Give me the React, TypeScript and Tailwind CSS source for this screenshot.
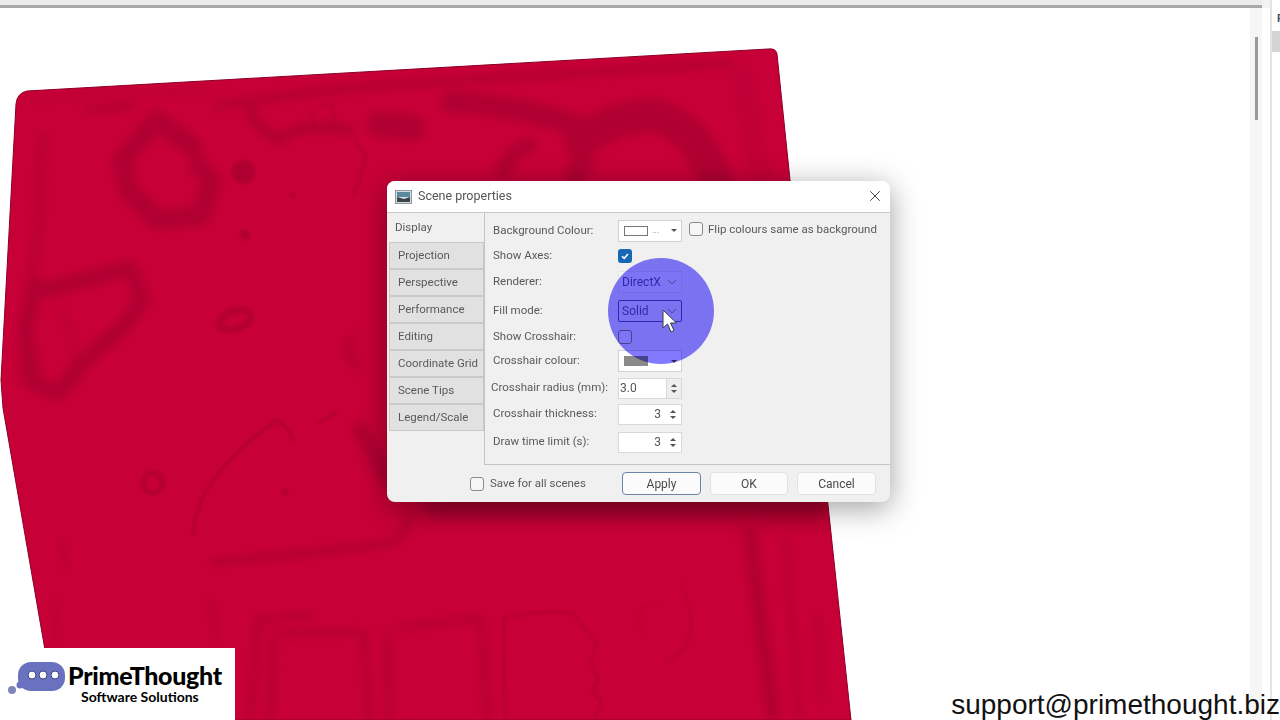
import { ReactNode } from "react";
import { X } from "lucide-react";

const MESH_OUTLINE =
  "M16 104 Q17 93 27 91 L768 49 Q776 48 777 54 L790 180 L828 505 L851 720 L50 720 L45 650 L3 408 L1 380 Z";

const tabs = [
  "Projection",
  "Perspective",
  "Performance",
  "Editing",
  "Coordinate Grid",
  "Scene Tips",
  "Legend/Scale",
];

// Red scanned surface behind the dialog
const Mesh = () => (
  <svg className="absolute left-0 top-0" width="1280" height="720">
    <defs>
      <clipPath id="mesh-clip">
        <path d={MESH_OUTLINE} />
      </clipPath>
      <filter id="soft" x="-20%" y="-20%" width="140%" height="140%">
        <feGaussianBlur stdDeviation="4" />
      </filter>
      <filter id="softer" x="-20%" y="-20%" width="140%" height="140%">
        <feGaussianBlur stdDeviation="1.4" />
      </filter>
      <filter id="softest" x="-20%" y="-100%" width="140%" height="300%">
        <feGaussianBlur stdDeviation="9" />
      </filter>
    </defs>
    <path d={MESH_OUTLINE} fill="#c80038" stroke="#8a0028" strokeWidth="1" />
    <g clipPath="url(#mesh-clip)" fill="none" stroke="#b00030" strokeLinecap="round" strokeLinejoin="round">
      <rect x="425" y="494" width="405" height="22" fill="#8f0028" stroke="none" opacity="0.8" filter="url(#softest)" />
      <g filter="url(#soft)">
        <path strokeWidth="20" d="M193 147 L157 120 L122 160 L128 190 L157 220 L200 216 L212 182 L198 165" />
        <path strokeWidth="12" d="M43 137 L38 230 L30 300 L22 380" opacity="0.5" />
        <path strokeWidth="6" d="M87 109 Q110 110 133 104" />
        <path strokeWidth="6" d="M30 100 Q120 92 210 90" opacity="0.4" />
        <path strokeWidth="10" d="M217 106 Q300 92 400 84 L730 63" opacity="0.7" />
        <path strokeWidth="34" d="M580 142 Q610 118 650 115 Q695 122 718 185" />
        <path strokeWidth="22" d="M452 102 Q520 106 575 125 Q592 150 575 178" />
        <path strokeWidth="16" d="M503 172 Q510 150 530 145" />
        <path strokeWidth="26" d="M380 124 L412 128" />
        <path strokeWidth="10" d="M250 108 Q256 130 280 140 Q300 120 350 130" />
        <path strokeWidth="6" d="M735 72 L756 180 M745 66 L768 180" opacity="0.6" />
        <path strokeWidth="16" d="M45 290 L130 268 L142 300 L125 325 L85 360 L60 392 L35 385 L25 330 L35 285" />
        <path strokeWidth="8" d="M60 310 Q80 340 70 370" opacity="0.4" />
        <path strokeWidth="7" d="M350 338 Q345 350 355 365" />
        <path strokeWidth="16" d="M360 430 L388 478" />
        <path strokeWidth="7" d="M213 562 Q300 555 390 543 Q405 538 410 515" />
        <path strokeWidth="7" d="M260 620 L313 615 M277 634 L363 632 L370 720 M273 640 L270 720" opacity="0.8" />
        <path strokeWidth="8" d="M387 635 L390 720 M400 628 L480 618 M482 625 L487 720 M258 620 L250 720" opacity="0.7" />
        <path strokeWidth="14" d="M750 533 Q760 620 773 715" />
        <path strokeWidth="6" d="M785 540 L800 720 M817 617 L822 700" opacity="0.7" />
        <path strokeWidth="12" d="M790 360 L800 470" opacity="0.3" />
        <path strokeWidth="5" d="M62 540 L66 570 M55 600 L58 640 M210 600 L217 640" opacity="0.7" />
      </g>
      <g filter="url(#softer)">
        <path strokeWidth="3" d="M193 535 Q195 495 233 457 Q255 435 277 420 Q288 425 293 440 M318 423 L336 413" />
        <path strokeWidth="2" d="M355 140 L367 157 L353 197" />
        <path strokeWidth="2" d="M312 110 L333 104 L335 130 L314 133 Z" opacity="0.7" />
        <path strokeWidth="2" d="M503 618 Q540 610 573 613 L597 645 L590 662 L599 680 L592 692 L601 702 L595 720 M503 618 L506 720" />
        <path strokeWidth="2" d="M641 610 Q650 600 665 604 M640 612 Q636 630 650 640" opacity="0.5" />
        <path strokeWidth="3" d="M680 583 Q695 610 690 635 Q682 655 665 662" opacity="0.5" />
        <circle cx="153" cy="483" r="10" strokeWidth="6" opacity="0.8" />
        <ellipse cx="235" cy="320" rx="16" ry="9" strokeWidth="8" opacity="0.8" transform="rotate(-20 235 320)" />
        <circle cx="293" cy="195" r="2" fill="#960028" strokeWidth="1" />
        <circle cx="245" cy="235" r="5" fill="#b00030" strokeWidth="1" />
        <circle cx="243" cy="172" r="12" fill="#b00030" strokeWidth="1" />
        <circle cx="285" cy="492" r="3" fill="#b00030" strokeWidth="1" />
      </g>
    </g>
  </svg>
);

const Check = ({ checked = false }: { checked?: boolean }) =>
  checked ? (
    <span className="flex h-[14px] w-[14px] items-center justify-center rounded-[3px] bg-[#1668b4]">
      <svg width="10" height="10" viewBox="0 0 10 10" fill="none" stroke="#fff" strokeWidth="1.5">
        <path d="M2 5.2 L4.2 7.3 L8 3" />
      </svg>
    </span>
  ) : (
    <span className="block h-[14px] w-[14px] rounded-[3px] border border-[#8a8a8a] bg-[#f6f6f6]" />
  );

const Swatch = ({ dark = false }: { dark?: boolean }) => (
  <div className="flex h-[22px] w-[64px] items-center gap-1 border border-[#d2d2d2] bg-white pl-[5px]">
    <span className={dark ? "h-[10px] w-[24px] bg-[#8a8a8a]" : "h-[10px] w-[24px] border border-[#777] bg-white"} />
    <span className="text-[9px] leading-none text-[#888]">{dark ? "" : "..."}</span>
    <span className="ml-auto mr-[4px] h-0 w-0 border-x-[3px] border-t-[3px] border-x-transparent border-t-[#555]" />
  </div>
);

const Combo = ({ value, active = false }: { value: string; active?: boolean }) => (
  <div
    className={`flex h-[22px] w-[64px] items-center justify-between border pl-[3px] pr-[4px] text-[12px] text-[#5f58a8] ${
      active ? "rounded-[2px] border-[#5a54b0]" : "border-[#e4e4e4] bg-[#f4f4f4]"
    }`}
  >
    {value}
    <svg width="10" height="6" viewBox="0 0 10 6" fill="none" stroke="#888" strokeWidth="1">
      <path d="M1 1 L5 5 L9 1" />
    </svg>
  </div>
);

const Spin = ({ value, left = false }: { value: string; left?: boolean }) => (
  <div className="flex h-[21px] w-[64px] items-center border border-[#d8d8d8] bg-white text-[12px] text-[#555]">
    <span className={left ? "pl-[1px]" : "flex-1 pr-[4px] text-right"}>{value}</span>
    <span
      className={`ml-auto flex h-full w-[15px] flex-col items-center justify-center gap-[3px] ${
        left ? "border-l border-[#d8d8d8] bg-[#eeeeee]" : "mr-[1px]"
      }`}
    >
      <span className="h-0 w-0 border-x-[3px] border-b-[3px] border-x-transparent border-b-[#555]" />
      <span className="h-0 w-0 border-x-[3px] border-t-[3px] border-x-transparent border-t-[#555]" />
    </span>
  </div>
);

const Row = ({ label, h, children, shift = false }: { label: string; h: string; children: ReactNode; shift?: boolean }) => (
  <div className={`grid grid-cols-[133px_1fr] items-center ${h}`}>
    <span className={`whitespace-nowrap text-[11.5px] text-[#5a5a5a] ${shift ? "pl-[6px]" : "pl-[8px]"}`}>{label}</span>
    <div className="flex items-center">{children}</div>
  </div>
);

const DialogButton = ({ label, primary = false }: { label: string; primary?: boolean }) => (
  <button
    className={`h-[23px] rounded-[4px] border bg-[#fbfbfb] text-[12px] text-[#4a4a4a] ${
      label === "OK" ? "w-[78px]" : "w-[79px]"
    } ${primary ? "border-[#6b84a8]" : "border-[#e2e2e2]"}`}
  >
    {label}
  </button>
);

const SceneProperties = () => (
  <div className="absolute left-[387px] top-[181px] flex h-[321px] w-[503px] flex-col overflow-hidden rounded-[8px] bg-[#f0f0f0] shadow-[0_6px_30px_rgba(0,0,0,0.38)] [font-family:Roboto,sans-serif]">
    <div className="flex h-[32px] shrink-0 items-center border-b border-[#c8c8c8] bg-white pl-[8px] pr-[6px]">
      <svg width="17" height="14" viewBox="0 0 17 14">
        <rect x="0.5" y="0.5" width="16" height="13" fill="#d6dde2" stroke="#8d979d" />
        <rect x="2" y="2" width="13" height="5" fill="#5b8a9e" />
        <path d="M2 12 L2 7 L9 9 L15 7 L15 12 Z" fill="#39434a" />
      </svg>
      <span className="ml-[6px] pb-[1px] text-[12.5px] text-[#555]">Scene properties</span>
      <X className="ml-auto mb-[2px] text-[#444]" size={18} strokeWidth={1.3} />
    </div>
    <div className="flex h-[252px] shrink-0">
      <div className="w-[97px] shrink-0 pl-[2px]">
        <div className="flex h-[29px] items-center pl-[6px] pt-[1px] text-[11.5px] text-[#5a5a5a]">Display</div>
        {tabs.map((tab) => (
          <div
            key={tab}
            className="flex h-[27px] items-center whitespace-nowrap border border-[#c9c9c9] bg-[#e1e1e1] pl-[8px] text-[11.5px] text-[#5a5a5a]"
          >
            {tab}
          </div>
        ))}
      </div>
      <div className="flex-1 border-b border-l border-[#c4c4c4] pt-[5px]">
        <Row label="Background Colour:" h="h-[25px]">
          <Swatch />
          <span className="ml-[7px] -mt-[3px]">
            <Check />
          </span>
          <span className="ml-[5px] -mt-[2px] whitespace-nowrap text-[11.5px] text-[#5a5a5a]">
            Flip colours same as background
          </span>
        </Row>
        <Row label="Show Axes:" h="h-[25px]">
          <Check checked />
        </Row>
        <Row label="Renderer:" h="h-[27px]">
          <Combo value="DirectX" />
        </Row>
        <Row label="Fill mode:" h="h-[31px]">
          <Combo value="Solid" active />
        </Row>
        <Row label="Show Crosshair:" h="h-[21px]">
          <Check />
        </Row>
        <Row label="Crosshair colour:" h="h-[28px]">
          <Swatch dark />
        </Row>
        <Row label="Crosshair radius (mm):" h="h-[26px]" shift>
          <Spin value="3.0" left />
        </Row>
        <Row label="Crosshair thickness:" h="h-[26px]">
          <Spin value="3" />
        </Row>
        <Row label="Draw time limit (s):" h="h-[30px]">
          <Spin value="3" />
        </Row>
      </div>
    </div>
    <div className="flex flex-1 items-center pl-[83px] pr-[14px]">
      <Check />
      <span className="ml-[6px] text-[11.5px] text-[#5a5a5a]">Save for all scenes</span>
      <div className="ml-auto flex items-center gap-[9px]">
        <DialogButton label="Apply" primary />
        <DialogButton label="OK" />
        <DialogButton label="Cancel" />
      </div>
    </div>
  </div>
);

// Click highlight and mouse pointer recorded over the dialog
const ClickHighlight = () => (
  <>
    <div className="absolute left-[608px] top-[258px] h-[106px] w-[106px] rounded-full bg-[#8279ff] mix-blend-multiply" />
    <svg className="absolute left-[661px] top-[309px]" width="18" height="26" viewBox="0 0 18 26">
      <path d="M2 1 L2 19 L6.5 15 L10 23 L13 21.5 L9.5 14 L15.5 14 Z" fill="#fff" stroke="#3a3a4a" strokeWidth="1" />
    </svg>
  </>
);

const Logo = () => (
  <div className="absolute bottom-0 left-0 flex h-[72px] w-[235px] items-start bg-white">
    <svg className="ml-[6px] mt-[12px] shrink-0" width="62" height="36" viewBox="0 0 62 36">
      <rect x="12" y="2" width="47" height="29" rx="13" fill="#6a72c0" />
      <circle cx="14" cy="25" r="3.5" fill="#6a72c0" />
      <circle cx="6" cy="30" r="4" fill="#7f86b8" />
      <circle cx="26" cy="15" r="4" fill="#fff" stroke="#3e4486" strokeWidth="1" />
      <circle cx="37" cy="15" r="4" fill="#fff" stroke="#3e4486" strokeWidth="1" />
      <circle cx="49" cy="15" r="4" fill="#fff" stroke="#3e4486" strokeWidth="1" />
    </svg>
    <div className="flex flex-col items-start pt-[13px] text-black [font-family:Lato,sans-serif]">
      <span className="text-[25px] font-black leading-[28px] tracking-[-0.3px]">PrimeThought</span>
      <span className="ml-[13px] text-[14px] font-bold leading-[15px]">Software Solutions</span>
    </div>
  </div>
);

const App = () => {
  return (
    <div className="relative h-[720px] w-[1280px] overflow-hidden bg-white">
      <div className="flex h-[8px]">
        <div className="flex-1 border-b-[3px] border-[#a8a8a8] bg-[#ececec]" />
        <div className="w-[18px] bg-[#f2f2f2]" />
      </div>
      <Mesh />
      {/* window scrollbar and the panel cut off at the right edge */}
      <div className="absolute bottom-0 right-[18px] top-[8px] flex w-[12px] justify-center bg-[#f6f6f6]">
        <div className="mt-[29px] h-[83px] w-[3px] bg-[#9a9a9a]" />
      </div>
      <div className="absolute bottom-0 right-0 top-0 w-[10px] overflow-hidden border-l-[2px] border-[#e4e4e4] bg-white">
        <div className="h-[31px] pl-[5px] pt-[13px] text-[11px] font-bold leading-none text-[#456] [font-family:Roboto,sans-serif]">
          P
        </div>
        <div className="h-[21px] bg-[#d4d4d4]" />
      </div>
      <SceneProperties />
      <ClickHighlight />
      <Logo />
      <div className="absolute bottom-[-2px] right-0 whitespace-nowrap text-[28px] leading-[34px] text-[#111] [font-family:'Liberation_Sans',sans-serif]">
        support@primethought.biz
      </div>
    </div>
  );
};

export default App;
